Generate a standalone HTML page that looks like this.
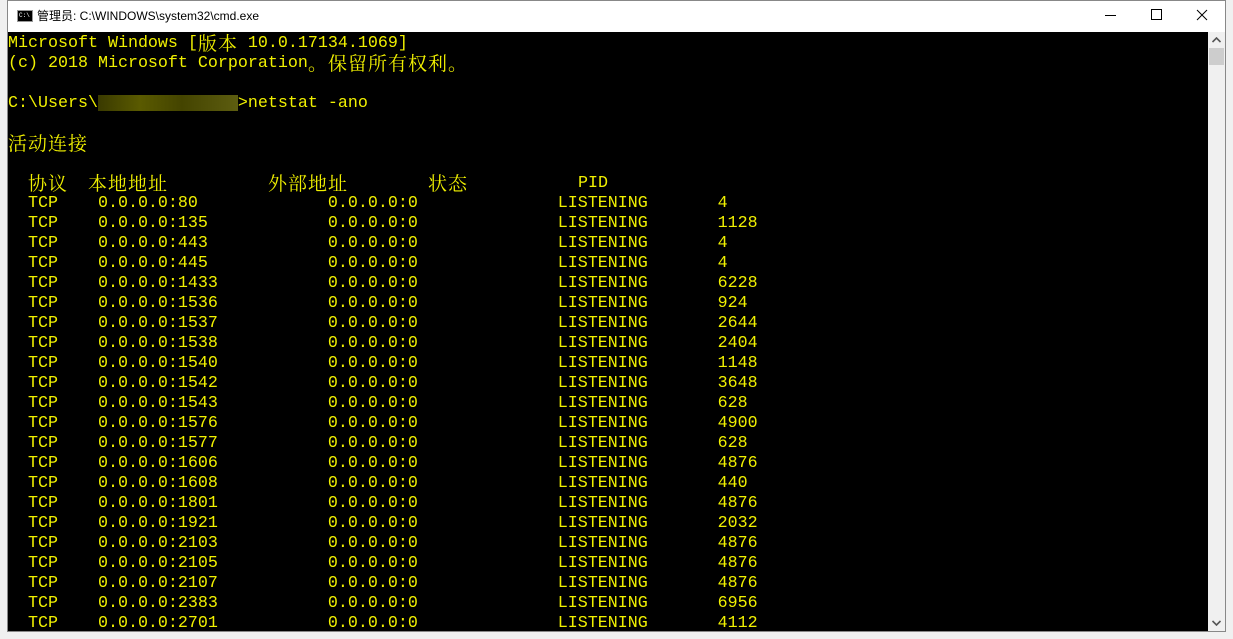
<!DOCTYPE html><html><head><meta charset="utf-8"><style>
body{margin:0;width:1233px;height:639px;background:#f0f0f0;position:relative;overflow:hidden;font-family:"Liberation Sans","Noto Sans CJK SC",sans-serif}
#win{position:absolute;left:7px;top:0;width:1219px;height:632px;background:#fff;border:1px solid #888;box-sizing:border-box}
#title{position:absolute;left:37px;top:7px;font-size:12px;color:#000;line-height:18px}
#con{position:absolute;left:8px;top:32px;width:1200px;height:599px;background:#000;overflow:hidden}
#sb{position:absolute;left:1208px;top:32px;width:17px;height:599px;background:#f0f0f0}
pre{margin:0;position:absolute;left:0;top:2px;font-family:"Liberation Mono","Noto Serif CJK SC",monospace;font-size:16.67px;line-height:20px;color:#f0f000}
.c{position:absolute;font-family:"Noto Serif CJK SC","Noto Sans CJK SC",serif;font-size:19px;line-height:20px;color:#f0f000;white-space:nowrap;letter-spacing:1px}
</style></head><body>
<div id="win"></div>
<div style="position:absolute;left:17px;top:10px;width:14px;height:10px;background:#000;border:1px solid #999"><div style="color:#fff;font-size:6px;line-height:9px;padding-left:1px;font-family:'Liberation Mono',monospace">C:\</div></div>
<div id="title">管理员: C:\WINDOWS\system32\cmd.exe</div>
<div style="position:absolute;left:1105px;top:15px;width:11px;height:1px;background:#000"></div>
<div style="position:absolute;left:1151px;top:9px;width:9px;height:9px;border:1px solid #000"></div>
<svg style="position:absolute;left:1196px;top:9px" width="12" height="12"><path d="M1 1L11 11M11 1L1 11" stroke="#000" stroke-width="1"/></svg>
<div id="con">
<pre>Microsoft Windows [     10.0.17134.1069]
(c) 2018 Microsoft Corporation

C:\Users\              &gt;netstat -ano




  TCP    0.0.0.0:80             0.0.0.0:0              LISTENING       4
  TCP    0.0.0.0:135            0.0.0.0:0              LISTENING       1128
  TCP    0.0.0.0:443            0.0.0.0:0              LISTENING       4
  TCP    0.0.0.0:445            0.0.0.0:0              LISTENING       4
  TCP    0.0.0.0:1433           0.0.0.0:0              LISTENING       6228
  TCP    0.0.0.0:1536           0.0.0.0:0              LISTENING       924
  TCP    0.0.0.0:1537           0.0.0.0:0              LISTENING       2644
  TCP    0.0.0.0:1538           0.0.0.0:0              LISTENING       2404
  TCP    0.0.0.0:1540           0.0.0.0:0              LISTENING       1148
  TCP    0.0.0.0:1542           0.0.0.0:0              LISTENING       3648
  TCP    0.0.0.0:1543           0.0.0.0:0              LISTENING       628
  TCP    0.0.0.0:1576           0.0.0.0:0              LISTENING       4900
  TCP    0.0.0.0:1577           0.0.0.0:0              LISTENING       628
  TCP    0.0.0.0:1606           0.0.0.0:0              LISTENING       4876
  TCP    0.0.0.0:1608           0.0.0.0:0              LISTENING       440
  TCP    0.0.0.0:1801           0.0.0.0:0              LISTENING       4876
  TCP    0.0.0.0:1921           0.0.0.0:0              LISTENING       2032
  TCP    0.0.0.0:2103           0.0.0.0:0              LISTENING       4876
  TCP    0.0.0.0:2105           0.0.0.0:0              LISTENING       4876
  TCP    0.0.0.0:2107           0.0.0.0:0              LISTENING       4876
  TCP    0.0.0.0:2383           0.0.0.0:0              LISTENING       6956
  TCP    0.0.0.0:2701           0.0.0.0:0              LISTENING       4112</pre>
<span class="c" style="left:190px;top:1px">版本</span>
<span class="c" style="left:300px;top:21px">。保留所有权利。</span>
<div style="position:absolute;left:90px;top:63px;width:140px;height:16px;background:linear-gradient(90deg,#3a3a00,#5a5a00 30%,#444400 60%,#5d5d10)"></div>
<span class="c" style="left:0;top:101px">活动连接</span>
<span class="c" style="left:20px;top:141px">协议</span>
<span class="c" style="left:80px;top:141px">本地地址</span>
<span class="c" style="left:260px;top:141px">外部地址</span>
<span class="c" style="left:420px;top:141px">状态</span>
<pre style="left:570px;top:142px">PID</pre>
</div>
<div id="sb"><svg style="position:absolute;left:4px;top:5px" width="9" height="6"><path d="M0.5 5L4.5 1L8.5 5" stroke="#555" stroke-width="1.6" fill="none"/></svg>
<div style="position:absolute;left:1px;top:16px;width:15px;height:17px;background:#cdcdcd"></div>
<svg style="position:absolute;left:4px;top:588px" width="9" height="6"><path d="M0.5 1L4.5 5L8.5 1" stroke="#555" stroke-width="1.6" fill="none"/></svg></div>
</body></html>
